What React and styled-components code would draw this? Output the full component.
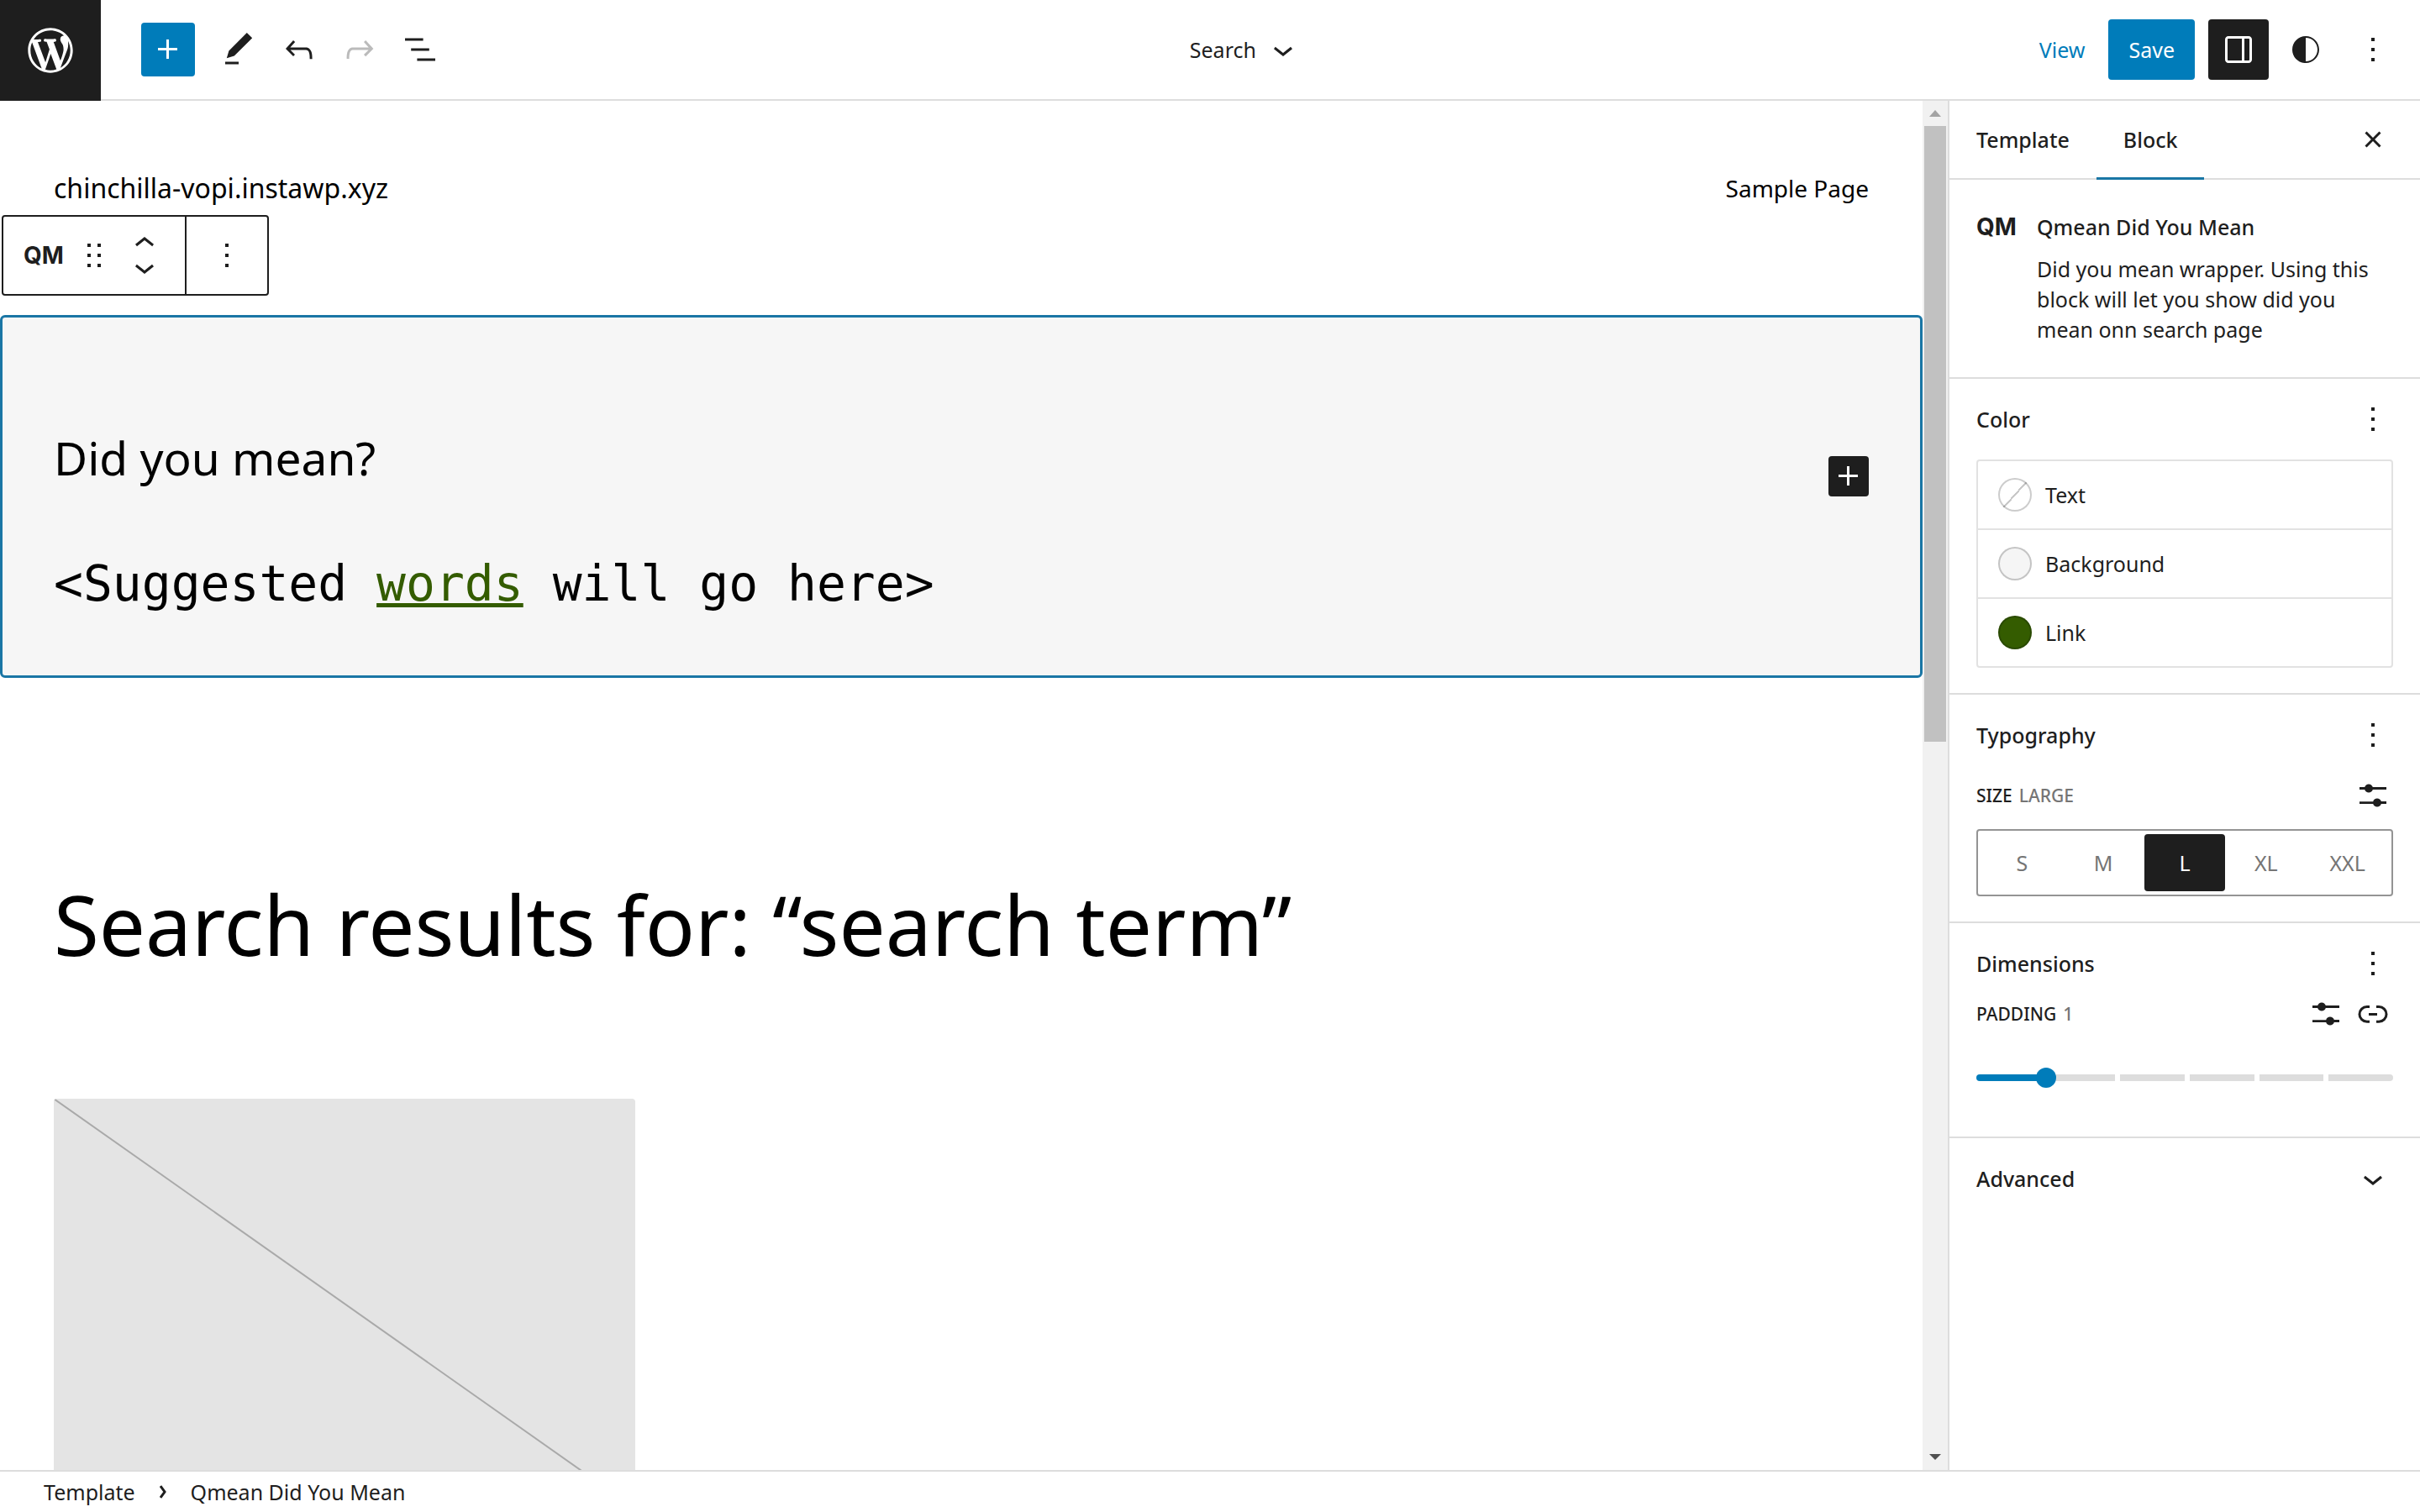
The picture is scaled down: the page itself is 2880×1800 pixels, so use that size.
import React, { useState } from "react";
import styled, { createGlobalStyle, css } from "styled-components";

const accent = "#007cba";
const accentLine = "#1a76a5";
const ink = "#1e1e1e";
const rule = "#dddddd";
const muted = "#757575";

const GlobalStyle = createGlobalStyle`
  *, *::before, *::after { box-sizing: border-box; }
  body {
    margin: 0;
    background: #fff;
    color: ${ink};
    font-family: "Noto Sans", "Open Sans", sans-serif;
    font-size: 25px;
    line-height: 36px;
  }
  h1, h2, p { margin: 0; font-weight: 400; }
  button { font: inherit; color: inherit; background: none; border: 0; padding: 0; margin: 0; cursor: pointer; }
`;

const paths = {
  plus: "M11 12.5V17.5H12.5V12.5H17.5V11H12.5V6H11V11H6V12.5H11Z",
  pencil: "M20.1 5.1L16.9 2 6.2 12.7l-1.3 4.4 4.5-1.3L20.1 5.1zM4 20.8h8v-1.5H4v1.5z",
  undo: "M18.3 11.7c-.6-.6-1.4-.9-2.3-.9H6.7l2.9-3.3-1.1-1-4.5 5L8.5 16l1-1-2.7-2.7H16c.5 0 .9.2 1.3.5 1 1 1 3.4 1 4.5v.3h1.5v-.2c0-1.5 0-4.3-1.5-5.7z",
  redo: "M15.6 6.5l-1.1 1 2.9 3.3H8c-.9 0-1.7.3-2.3.9-1.4 1.5-1.4 4.2-1.4 5.6v.2h1.5v-.3c0-1.1 0-3.5 1-4.5.3-.3.7-.5 1.3-.5h9.2L14.5 15l1.1 1.1 4.6-4.6-4.6-5z",
  list: "M13.8 5.2H3v1.5h10.8V5.2zm-3.6 12v1.5H21v-1.5H10.2zm7.2-6H6.6v1.5h10.8v-1.5z",
  down: "M17.5 11.6L12 16l-5.5-4.4.9-1.2L12 14l4.5-3.6 1 1.2z",
  up: "M6.5 12.4L12 8l5.5 4.4-.9 1.2L12 10l-4.5 3.6-1-1.2z",
  drawer: "M18 4H6c-1.1 0-2 .9-2 2v12c0 1.1.9 2 2 2h12c1.1 0 2-.9 2-2V6c0-1.1-.9-2-2-2zm-4 14.5H6c-.3 0-.5-.2-.5-.5V6c0-.3.2-.5.5-.5h8v13zm4.5-.5c0 .3-.2.5-.5.5h-2.5v-13H18c.3 0 .5.2.5.5v12z",
  styles: "M12 4c-4.4 0-8 3.6-8 8v.1c0 4.1 3.2 7.5 7.2 7.9h.8c4.4 0 8-3.6 8-8s-3.6-8-8-8zm0 15V5c3.9 0 7 3.1 7 7s-3.1 7-7 7z",
  more: "M13 19h-2v-2h2v2zm0-6h-2v-2h2v2zm0-6h-2V5h2v2z",
  close: "M12 13.06l3.712 3.713 1.061-1.06L13.061 12l3.712-3.712-1.06-1.06L12 10.938 8.288 7.227l-1.061 1.06L10.939 12l-3.712 3.712 1.06 1.061L12 13.061z",
  drag: "M8 7h2V5H8v2zm0 6h2v-2H8v2zm0 6h2v-2H8v2zm6-14v2h2V5h-2zm0 8h2v-2h-2v2zm0 6h2v-2h-2v2z",
  settings: "M14.5 13.8c-1.1 0-2.1.7-2.4 1.8H4V17h8.1c.3 1 1.3 1.8 2.4 1.8s2.1-.7 2.4-1.8H20v-1.5h-3.1c-.3-1-1.3-1.7-2.4-1.7zM11.9 7c-.3-1-1.3-1.8-2.4-1.8S7.4 6 7.1 7H4v1.5h3.1c.3 1 1.3 1.8 2.4 1.8s2.1-.7 2.4-1.8H20V7h-8.1z",
  link: "M10 17.389H8.444A5.194 5.194 0 1 1 8.444 7H10v1.5H8.444a3.694 3.694 0 0 0 0 7.389H10v1.5ZM14 7h1.556a5.194 5.194 0 0 1 0 10.39H14v-1.5h1.556a3.694 3.694 0 0 0 0-7.39H14V7Zm-4.5 6h5v-1.5h-5V13Z",
};

const IconSvg = styled.svg`
  display: block;
  flex: none;
  width: 48px;
  height: 48px;
  fill: currentColor;
`;

const Icon = ({ name }) => (
  <IconSvg viewBox="0 0 24 24" aria-hidden="true">
    <path d={paths[name]} />
  </IconSvg>
);

const Shell = styled.div`
  display: flex;
  flex-direction: column;
  height: 100vh;
  overflow: hidden;
`;

/* Top bar */

const TopBar = styled.header`
  display: grid;
  grid-template-columns: auto auto 1fr auto;
  height: 120px;
  flex: none;
`;

const HomeButton = styled.button`
  display: grid;
  place-items: center;
  width: 120px;
  background: ${ink};
  color: #fff;
`;

const Logo = styled.svg`
  display: block;
  width: 64px;
  height: 64px;
  fill: currentColor;
`;

const BarGroup = styled.div`
  display: flex;
  align-items: center;
  justify-content: ${(p) => p.$align || "flex-start"};
  gap: ${(p) => p.$gap || 0}px;
  padding: ${(p) => p.$pad || "0"};
  border-bottom: 2px solid ${rule};
`;

const InserterButton = styled.button`
  display: grid;
  place-items: center;
  width: 64px;
  height: 64px;
  margin-right: 16px;
  border-radius: 4px;
  background: ${accent};
  color: #fff;
`;

const ToolButton = styled.button`
  display: grid;
  place-items: center;
  width: 72px;
  height: 72px;
  border-radius: 4px;
  ${(p) => p.$active && css`background: ${ink}; color: #fff;`}
  &:disabled { color: #bbbbbb; cursor: default; }
`;

const DocumentButton = styled.button`
  display: flex;
  align-items: center;
  gap: 8px;
`;

const ViewLink = styled.a`
  padding: 0 20px;
  color: ${accent};
  text-decoration: none;
`;

const SaveButton = styled.button`
  height: 72px;
  padding: 0 24px;
  margin-right: 8px;
  border-radius: 4px;
  background: ${accent};
  color: #fff;
`;

/* Body */

const Body = styled.div`
  display: flex;
  flex: 1;
  min-height: 0;
`;

const Canvas = styled.main`
  flex: 1;
  min-width: 0;
  overflow: hidden;
  color: #000;
`;

const SiteHeader = styled.div`
  display: flex;
  justify-content: space-between;
  padding: 80px 64px 8px;
  line-height: 48px;
`;

const SiteTitle = styled.a`
  color: inherit;
  font-size: 32px;
  text-decoration: none;
`;

const SiteLink = styled.a`
  color: inherit;
  font-size: 28px;
  text-decoration: none;
`;

const BlockToolbar = styled.div`
  display: flex;
  width: max-content;
  height: 96px;
  margin: 0 0 23px 2px;
  border: 2px solid ${ink};
  border-radius: 4px;
  color: ${ink};
`;

const ToolbarGroup = styled.div`
  display: flex;
  & + & { border-left: 2px solid ${ink}; }
`;

const ToolbarButton = styled.button`
  display: flex;
  align-items: center;
  justify-content: center;
  width: ${(p) => (p.$narrow ? 24 : 96)}px;
`;

const Movers = styled.div`
  display: flex;
  flex-direction: column;
  justify-content: center;
  width: 96px;
`;

const MoverButton = styled.button`
  display: flex;
  align-items: center;
  justify-content: center;
  height: 28px;
`;

const BrandMark = styled.span`
  font-family: Inter, sans-serif;
  font-size: 28px;
  font-weight: 700;
`;

const SelectedBlock = styled.section`
  display: flex;
  flex-direction: column;
  gap: 58px;
  padding: 121px 61px 63px;
  border: 3px solid ${accentLine};
  border-radius: 6px;
  background: #f6f6f6;
`;

const PromptRow = styled.div`
  display: flex;
  align-items: flex-end;
  justify-content: space-between;
`;

const Prompt = styled.p`
  font-size: 55px;
  line-height: 92px;
`;

const Suggestion = styled.p`
  font-family: "DejaVu Sans Mono", monospace;
  font-size: 58px;
  line-height: 92px;
`;

const SuggestedLink = styled.a`
  color: #345c00;
  text-decoration: underline;
`;

const AppenderButton = styled.button`
  width: 48px;
  height: 48px;
  border-radius: 4px;
  background: ${ink};
  color: #fff;
`;

const ResultsTitle = styled.h1`
  padding: 225px 64px 0;
  font-size: 98px;
  line-height: 136px;
`;

const FeaturedImage = styled.div`
  width: 692px;
  height: 488px;
  margin: 140px 64px 0;
  border-radius: 4px;
  background: #e4e4e4;
  overflow: hidden;
`;

const Diagonal = styled.svg`
  display: block;
  width: 100%;
  height: 100%;
  stroke: #a9a9a9;
  stroke-width: 2;
`;

/* Scroll bar */

const ScrollBar = styled.div`
  display: flex;
  flex-direction: column;
  align-items: center;
  width: 30px;
  background: #f1f1f1;
`;

const ScrollThumb = styled.div`
  width: 26px;
  height: 733px;
  background: #c1c1c1;
`;

const ScrollArrow = styled.svg`
  display: block;
  width: 30px;
  height: 30px;
  fill: ${(p) => p.$fill};
`;

const ScrollSpace = styled.div`
  flex: 1;
`;

/* Settings sidebar */

const Sidebar = styled.aside`
  width: 562px;
  flex: none;
  border-left: 2px solid ${rule};
`;

const TabBar = styled.div`
  display: flex;
  height: 94px;
  border-bottom: 2px solid ${rule};
`;

const Tab = styled.button`
  height: 94px;
  padding: 0 32px;
  font-weight: 500;
  border-bottom: 3px solid ${(p) => (p.$active ? accentLine : "transparent")};
`;

const CloseButton = styled.button`
  margin: 0 32px 0 auto;
`;

const BlockCard = styled.div`
  display: grid;
  grid-template-columns: 48px 1fr;
  gap: 24px;
  padding: 38px 52px 39px 32px;
`;

const CardText = styled.div`
  display: flex;
  flex-direction: column;
  gap: 14px;
`;

const CardTitle = styled.h2`
  font-size: 25px;
  font-weight: 500;
  line-height: 36px;
`;

const Panel = styled.section`
  padding: 0 32px ${(p) => (p.$closed ? 0 : 30)}px;
  border-top: 2px solid ${rule};
`;

const PanelHeader = styled.div`
  display: flex;
  align-items: center;
  justify-content: space-between;
  height: 96px;
`;

const ColorList = styled.div`
  border: 2px solid #e2e2e2;
  border-radius: 4px;
`;

const ColorRow = styled.button`
  display: flex;
  align-items: center;
  gap: 16px;
  width: 100%;
  height: 80px;
  padding: 0 24px;
  & + & { height: 82px; border-top: 2px solid #e2e2e2; }
`;

const Swatch = styled.span`
  width: 40px;
  height: 40px;
  border-radius: 50%;
  border: 2px solid rgba(0, 0, 0, 0.2);
  background: ${(p) =>
    p.$color ||
    "linear-gradient(-48deg, transparent 48%, #c8c8c8 48%, #c8c8c8 52%, transparent 52%)"};
`;

const ControlRow = styled.div`
  display: flex;
  align-items: center;
  gap: 8px;
  height: ${(p) => (p.$compact ? 24 : 48)}px;
  font-size: 21px;
`;

const ControlName = styled.span`
  font-weight: 500;
  text-transform: uppercase;
`;

const ControlValue = styled.span`
  flex: 1;
  color: ${muted};
  font-weight: 500;
  text-transform: uppercase;
`;

const SizeGroup = styled.div`
  display: grid;
  grid-template-columns: repeat(5, 1fr);
  height: 80px;
  margin-top: 16px;
  padding: 4px;
  border: 2px solid #949494;
  border-radius: 4px;
`;

const SizeOption = styled.label`
  display: grid;
  place-items: center;
  border-radius: 4px;
  color: ${muted};
  cursor: pointer;
  &:has(input:checked) { background: ${ink}; color: #fff; }
`;

const SizeRadio = styled.input`
  appearance: none;
  width: 0;
  height: 0;
  margin: 0;
  grid-area: 1 / 1;
`;

const SizeText = styled.span`
  grid-area: 1 / 1;
`;

const Slider = styled.div`
  display: grid;
  align-items: center;
  height: 80px;
  margin-top: 24px;
`;

const Track = styled.div`
  grid-area: 1 / 1;
  display: grid;
  grid-template-columns: repeat(6, 1fr);
  height: 8px;
  border-radius: 4px;
  overflow: hidden;
`;

const TrackStep = styled.span`
  background: ${(p) => (p.$filled ? accent : rule)};
  border-left: ${(p) => (p.$marked ? 6 : 0)}px solid #fff;
`;

const Range = styled.input`
  grid-area: 1 / 1;
  appearance: none;
  height: 24px;
  margin: 0 -12px;
  background: transparent;
  &::-webkit-slider-thumb {
    appearance: none;
    width: 24px;
    height: 24px;
    border-radius: 50%;
    background: ${accent};
  }
`;

const PanelToggle = styled.button`
  display: flex;
  align-items: center;
  justify-content: space-between;
  width: 100%;
  height: 96px;
  font-weight: 500;
`;

/* Breadcrumb footer */

const Footer = styled.footer`
  display: flex;
  align-items: center;
  flex: none;
  height: 50px;
  padding: 0 52px;
  border-top: 2px solid ${rule};
`;

const Crumb = styled.button`
  line-height: 36px;
`;

const CrumbArrow = styled.svg`
  width: 8px;
  height: 16px;
  margin: 0 29px;
  fill: none;
  stroke: ${ink};
  stroke-width: 3;
`;

const sizes = ["S", "M", "L", "XL", "XXL"];
const colors = [
  { name: "Text", value: null },
  { name: "Background", value: "#f5f5f5" },
  { name: "Link", value: "#345c00" },
];

const TitledPanel = ({ title, children }) => (
  <Panel>
    <PanelHeader>
      <CardTitle>{title}</CardTitle>
      <button aria-label={`${title} options`}><Icon name="more" /></button>
    </PanelHeader>
    {children}
  </Panel>
);

export default function App() {
  const [size, setSize] = useState("L");
  const [padding, setPadding] = useState(1);

  return (
    <Shell>
      <GlobalStyle />
      <TopBar>
        <HomeButton aria-label="Open navigation">
          <Logo viewBox="-2 -2 24 24" aria-hidden="true">
            <path d="M20 10c0-5.51-4.49-10-10-10C4.48 0 0 4.49 0 10c0 5.52 4.48 10 10 10 5.51 0 10-4.48 10-10zM7.78 15.37L4.37 6.22c.55-.02 1.17-.08 1.17-.08.5-.06.44-1.13-.06-1.11 0 0-1.45.11-2.37.11-.18 0-.37 0-.58-.01C4.12 2.69 6.87 1.11 10 1.11c2.33 0 4.45.87 6.05 2.34-.68-.11-1.65.39-1.65 1.58 0 .74.45 1.36.9 2.1.35.61.55 1.36.55 2.46 0 1.49-1.4 5-1.4 5l-3.03-8.37c.54-.02.82-.17.82-.17.5-.05.44-1.25-.06-1.22 0 0-1.44.12-2.38.12-.87 0-2.33-.12-2.33-.12-.5-.03-.56 1.2-.06 1.22l.92.08 1.26 3.41zM17.41 10c.24-.64.74-1.87.43-4.25.7 1.29 1.05 2.71 1.05 4.25 0 3.29-1.73 6.24-4.4 7.78.97-2.59 1.94-5.2 2.92-7.78zM6.1 18.09C3.12 16.65 1.11 13.53 1.11 10c0-1.3.23-2.48.72-3.59C3.25 10.3 4.67 14.2 6.1 18.09zm4.03-6.63l2.58 6.98c-.86.29-1.76.45-2.71.45-.79 0-1.57-.11-2.29-.33.81-2.38 1.62-4.74 2.42-7.1z" />
          </Logo>
        </HomeButton>
        <BarGroup $pad="0 24px 0 48px">
          <InserterButton aria-label="Toggle block inserter"><Icon name="plus" /></InserterButton>
          <ToolButton aria-label="Tools"><Icon name="pencil" /></ToolButton>
          <ToolButton aria-label="Undo"><Icon name="undo" /></ToolButton>
          <ToolButton aria-label="Redo" disabled><Icon name="redo" /></ToolButton>
          <ToolButton aria-label="List view"><Icon name="list" /></ToolButton>
        </BarGroup>
        <BarGroup $align="center">
          <DocumentButton>Search<Icon name="down" /></DocumentButton>
        </BarGroup>
        <BarGroup $align="flex-end" $gap={8} $pad="0 20px 0 0">
          <ViewLink href="#view">View</ViewLink>
          <SaveButton>Save</SaveButton>
          <ToolButton $active aria-label="Settings"><Icon name="drawer" /></ToolButton>
          <ToolButton aria-label="Styles"><Icon name="styles" /></ToolButton>
          <ToolButton aria-label="Options"><Icon name="more" /></ToolButton>
        </BarGroup>
      </TopBar>

      <Body>
        <Canvas>
          <SiteHeader>
            <SiteTitle href="#home">chinchilla-vopi.instawp.xyz</SiteTitle>
            <SiteLink href="#sample">Sample Page</SiteLink>
          </SiteHeader>
          <BlockToolbar role="toolbar" aria-label="Block tools">
            <ToolbarGroup>
              <ToolbarButton><BrandMark>QM</BrandMark></ToolbarButton>
              <ToolbarButton $narrow aria-label="Drag"><Icon name="drag" /></ToolbarButton>
              <Movers>
                <MoverButton aria-label="Move up"><Icon name="up" /></MoverButton>
                <MoverButton aria-label="Move down"><Icon name="down" /></MoverButton>
              </Movers>
            </ToolbarGroup>
            <ToolbarGroup>
              <ToolbarButton aria-label="Block options"><Icon name="more" /></ToolbarButton>
            </ToolbarGroup>
          </BlockToolbar>
          <SelectedBlock>
            <PromptRow>
              <Prompt>Did you mean?</Prompt>
              <AppenderButton aria-label="Add block"><Icon name="plus" /></AppenderButton>
            </PromptRow>
            <Suggestion>
              &lt;Suggested <SuggestedLink href="#words">words</SuggestedLink> will go here&gt;
            </Suggestion>
          </SelectedBlock>
          <ResultsTitle>Search results for: “search term”</ResultsTitle>
          <FeaturedImage>
            <Diagonal viewBox="0 0 692 488" preserveAspectRatio="none" aria-hidden="true">
              <line x1="0" y1="0" x2="692" y2="488" />
            </Diagonal>
          </FeaturedImage>
        </Canvas>

        <ScrollBar aria-hidden="true">
          <ScrollArrow $fill="#a3a3a3" viewBox="0 0 30 30"><path d="M8 19l7-8 7 8z" /></ScrollArrow>
          <ScrollThumb />
          <ScrollSpace />
          <ScrollArrow $fill="#505050" viewBox="0 0 30 30"><path d="M8 11l7 7 7-7z" /></ScrollArrow>
        </ScrollBar>

        <Sidebar>
          <TabBar role="tablist">
            <Tab role="tab" aria-selected="false">Template</Tab>
            <Tab role="tab" aria-selected="true" $active>Block</Tab>
            <CloseButton aria-label="Close settings"><Icon name="close" /></CloseButton>
          </TabBar>
          <BlockCard>
            <BrandMark>QM</BrandMark>
            <CardText>
              <CardTitle>Qmean Did You Mean</CardTitle>
              <p>Did you mean wrapper. Using this block will let you show did you mean onn search page</p>
            </CardText>
          </BlockCard>

          <TitledPanel title="Color">
            <ColorList>
              {colors.map((c) => (
                <ColorRow key={c.name}><Swatch $color={c.value} />{c.name}</ColorRow>
              ))}
            </ColorList>
          </TitledPanel>

          <TitledPanel title="Typography">
            <ControlRow>
              <ControlName>Size</ControlName>
              <ControlValue>Large</ControlValue>
              <button aria-label="Set custom size"><Icon name="settings" /></button>
            </ControlRow>
            <SizeGroup role="radiogroup" aria-label="Size">
              {sizes.map((s) => (
                <SizeOption key={s}>
                  <SizeRadio type="radio" name="size" value={s} checked={size === s} onChange={() => setSize(s)} />
                  <SizeText>{s}</SizeText>
                </SizeOption>
              ))}
            </SizeGroup>
          </TitledPanel>

          <TitledPanel title="Dimensions">
            <ControlRow $compact>
              <ControlName as="label" htmlFor="padding">Padding</ControlName>
              <ControlValue>{padding}</ControlValue>
              <button aria-label="Set custom padding"><Icon name="settings" /></button>
              <button aria-label="Unlink sides"><Icon name="link" /></button>
            </ControlRow>
            <Slider>
              <Track>
                {[0, 1, 2, 3, 4, 5].map((i) => (
                  <TrackStep key={i} $filled={i < padding} $marked={i > padding} />
                ))}
              </Track>
              <Range id="padding" type="range" min="0" max="6" value={padding} onChange={(e) => setPadding(Number(e.target.value))} />
            </Slider>
          </TitledPanel>

          <Panel $closed>
            <PanelToggle aria-expanded="false">Advanced<Icon name="down" /></PanelToggle>
          </Panel>
        </Sidebar>
      </Body>

      <Footer>
        <Crumb>Template</Crumb>
        <CrumbArrow viewBox="0 0 8 16" aria-hidden="true"><path d="M1 1l5 7-5 7" /></CrumbArrow>
        <Crumb>Qmean Did You Mean</Crumb>
      </Footer>
    </Shell>
  );
}
